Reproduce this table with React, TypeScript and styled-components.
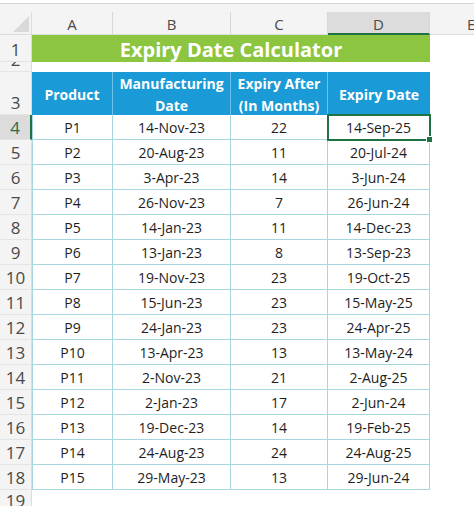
import React from "react";
import styled, { createGlobalStyle, css } from "styled-components";

const GlobalStyle = createGlobalStyle`
  html, body { margin: 0; padding: 0; background: #ffffff; }
  body { font-family: "Open Sans", "Noto Sans", Arial, sans-serif; overflow: hidden; }
`;

const COLS = "32px 81px 118px 97px 102px 1fr";
const GRID_LINE = "#a8d6e0";
const ACCENT = "#1f7244";

const Page = styled.div`
  width: 474px;
  height: 506px;
  display: flex;
  flex-direction: column;
  background: #ffffff;
  overflow: hidden;
`;

const FormulaStrip = styled.div`
  height: 3px;
  background: #ffffff;
  border-bottom: 1px solid #d6d6d6;
  flex: none;
`;

const ToolbarGap = styled.div`
  height: 8px;
  background: #f4f4f4;
  flex: none;
`;

const Sheet = styled.div`
  display: grid;
  grid-template-columns: ${COLS};
  grid-template-rows: 23px 27px 10px 43px repeat(15, 25px) 1fr;
  flex: 1;
`;

const Corner = styled.div`
  background: #f4f4f4;
  border-right: 1px solid #dcdcdc;
  border-bottom: 1px solid #dcdcdc;
  display: flex;
  align-items: flex-end;
  justify-content: flex-end;
  padding: 0 2px 2px 0;
`;

const ColHead = styled.div<{ $active?: boolean }>`
  background: ${(p) => (p.$active ? "#dcdcdc" : "#f4f4f4")};
  border-right: 1px solid #d8d8d8;
  border-bottom: ${(p) => (p.$active ? `2px solid ${ACCENT}` : "1px solid #dcdcdc")};
  color: #4a4a4a;
  font-size: 15px;
  display: flex;
  align-items: center;
  justify-content: center;
  padding-top: 2px;
  box-sizing: border-box;
`;

const ColHeadRest = styled(ColHead)`
  justify-content: flex-start;
  padding-left: 37px;
  border-right: none;
`;

const RowHead = styled.div<{ $active?: boolean }>`
  background: ${(p) => (p.$active ? "#dcdcdc" : "#f4f4f4")};
  border-right: ${(p) => (p.$active ? `2px solid ${ACCENT}` : "1px solid #dcdcdc")};
  border-bottom: 1px solid #e4e4e4;
  color: ${(p) => (p.$active ? "#2e6b46" : "#4a4a4a")};
  font-size: 17px;
  line-height: 21px;
  display: flex;
  align-items: flex-end;
  justify-content: center;
  padding-bottom: 1px;
  overflow: hidden;
  box-sizing: border-box;
`;

const TitleCell = styled.div`
  grid-column: span 4;
  background: #8cc540;
  color: #ffffff;
  font-weight: 700;
  font-size: 20px;
  display: flex;
  align-items: center;
  justify-content: center;
  padding-top: 1px;
`;

const Blank = styled.div<{ $span?: number }>`
  background: #ffffff;
  ${(p) => p.$span && css`grid-column: span ${p.$span};`}
`;

const HeadCell = styled.div<{ $last?: boolean }>`
  background: #1a9ad6;
  color: #ffffff;
  font-weight: 700;
  font-size: 14px;
  line-height: 22px;
  text-align: center;
  display: flex;
  align-items: center;
  justify-content: center;
  border-right: ${(p) => (p.$last ? "none" : "1px solid #6cc1ea")};
  padding-top: 2px;
  box-sizing: border-box;
`;

const DataCell = styled.div<{ $first?: boolean; $selected?: boolean }>`
  position: relative;
  color: #1e1e1e;
  font-size: 14px;
  display: flex;
  align-items: center;
  justify-content: center;
  padding-top: 1px;
  border-right: 1px solid ${GRID_LINE};
  border-bottom: 1px solid ${GRID_LINE};
  ${(p) => p.$first && css`border-left: 1px solid ${GRID_LINE};`}
  ${(p) =>
    p.$selected &&
    css`
      outline: 2px solid ${ACCENT};
      outline-offset: -1px;
      z-index: 1;
    `}
  box-sizing: border-box;
`;

const FillHandle = styled.span`
  position: absolute;
  right: -4px;
  bottom: -4px;
  width: 5px;
  height: 5px;
  background: ${ACCENT};
  border: 1px solid #ffffff;
`;

const rows: [string, string, number, string][] = [
  ["P1", "14-Nov-23", 22, "14-Sep-25"],
  ["P2", "20-Aug-23", 11, "20-Jul-24"],
  ["P3", "3-Apr-23", 14, "3-Jun-24"],
  ["P4", "26-Nov-23", 7, "26-Jun-24"],
  ["P5", "14-Jan-23", 11, "14-Dec-23"],
  ["P6", "13-Jan-23", 8, "13-Sep-23"],
  ["P7", "19-Nov-23", 23, "19-Oct-25"],
  ["P8", "15-Jun-23", 23, "15-May-25"],
  ["P9", "24-Jan-23", 23, "24-Apr-25"],
  ["P10", "13-Apr-23", 13, "13-May-24"],
  ["P11", "2-Nov-23", 21, "2-Aug-25"],
  ["P12", "2-Jan-23", 17, "2-Jun-24"],
  ["P13", "19-Dec-23", 14, "19-Feb-25"],
  ["P14", "24-Aug-23", 24, "24-Aug-25"],
  ["P15", "29-May-23", 13, "29-Jun-24"],
];

export default function App() {
  return (
    <Page>
      <GlobalStyle />
      <FormulaStrip />
      <ToolbarGap />
      <Sheet>
        <Corner>
          <svg width="16" height="16" viewBox="0 0 16 16">
            <polygon points="16,0 16,16 0,16" fill="#d9d9d9" />
          </svg>
        </Corner>
        <ColHead>A</ColHead>
        <ColHead>B</ColHead>
        <ColHead>C</ColHead>
        <ColHead $active>D</ColHead>
        <ColHeadRest>E</ColHeadRest>

        <RowHead>1</RowHead>
        <TitleCell>Expiry Date Calculator</TitleCell>
        <Blank />

        <RowHead>2</RowHead>
        <Blank $span={5} />

        <RowHead>3</RowHead>
        <HeadCell>Product</HeadCell>
        <HeadCell>
          Manufacturing
          <br />
          Date
        </HeadCell>
        <HeadCell>
          Expiry After
          <br />
          (In Months)
        </HeadCell>
        <HeadCell $last>Expiry Date</HeadCell>
        <Blank />

        {rows.map((r, i) => (
          <React.Fragment key={r[0]}>
            <RowHead $active={i === 0}>{i + 4}</RowHead>
            <DataCell $first>{r[0]}</DataCell>
            <DataCell>{r[1]}</DataCell>
            <DataCell>{r[2]}</DataCell>
            <DataCell $selected={i === 0}>
              {r[3]}
              {i === 0 && <FillHandle />}
            </DataCell>
            <Blank />
          </React.Fragment>
        ))}

        <RowHead>19</RowHead>
        <Blank $span={5} />
      </Sheet>
    </Page>
  );
}
